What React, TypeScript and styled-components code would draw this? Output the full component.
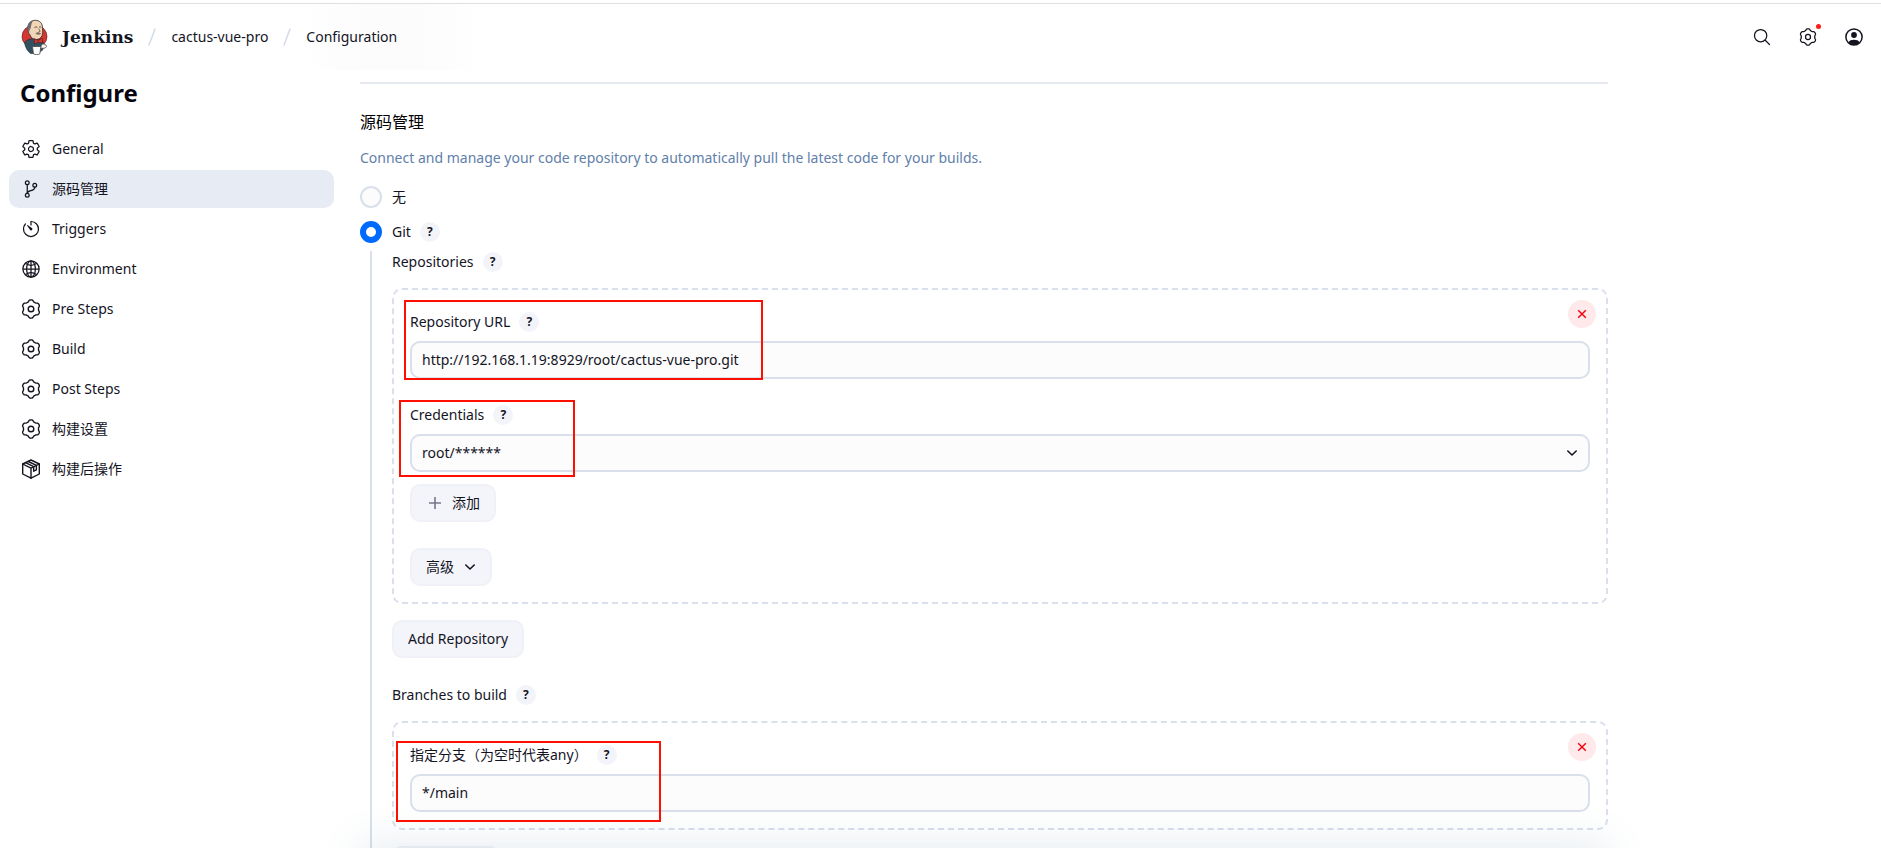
import React, { useState } from 'react';
import styled, { createGlobalStyle } from 'styled-components';
import {
  IoGitBranchOutline,
  IoGlobeOutline,
  IoSearchOutline,
  IoSettingsOutline,
  IoTimerOutline,
} from 'react-icons/io5';

const ink = '#14141f';
const line = '#d9dfeb';
const sans = `'Noto Sans', 'Noto Sans CJK SC', sans-serif`;

const GlobalStyle = createGlobalStyle`
  *, *::before, *::after { box-sizing: border-box; }
  body {
    margin: 0;
    background: #fff;
    color: ${ink};
    font: 14px/20px ${sans};
  }
  button, input, select { font: inherit; color: inherit; margin: 0; }
`;

/* ---------- page frame ---------- */

const Page = styled.div`
  display: flex;
  flex-direction: column;
  height: 100vh;
  overflow: hidden;
`;

const Header = styled.header`
  flex: none;
  display: flex;
  align-items: center;
  justify-content: space-between;
  height: 67px;
  margin-top: 3px;
  padding: 0 17px 0 21px;
  border-top: 1px solid #e0e0e0;
  background: linear-gradient(90deg, #fff 300px, #fcfcfd 360px, #fcfcfd 420px, #fff 490px);
`;

const Breadcrumbs = styled.nav`
  display: flex;
  align-items: center;
  gap: 15px;
`;

const Crumb = styled.a`
  color: inherit;
  text-decoration: none;
`;

const Brand = styled(Crumb)`
  display: flex;
  align-items: center;
  gap: 14px;
  font: bold 17px/34px 'DejaVu Serif', serif;
`;

const HeaderActions = styled.div`
  display: flex;
  align-items: center;
  gap: 26px;
`;

const IconButton = styled.button`
  position: relative;
  display: grid;
  place-items: center;
  width: 20px;
  height: 20px;
  padding: 0;
  border: 0;
  background: none;
  cursor: pointer;
`;

const Badge = styled.span`
  position: absolute;
  top: -3px;
  right: -3px;
  width: 5px;
  height: 5px;
  border-radius: 50%;
  background: #ff1a1a;
`;

const Body = styled.div`
  flex: 1;
  display: flex;
  gap: 26px;
  min-height: 0;
`;

/* ---------- side panel ---------- */

const SidePanel = styled.aside`
  flex: none;
  width: 334px;
  padding-left: 9px;
`;

const Title = styled.h1`
  margin: 6px 0 20px;
  padding-left: 11px;
  font-size: 24px;
  line-height: 34px;
  font-weight: 700;
  color: #05050f;
`;

const TaskList = styled.ul`
  display: flex;
  flex-direction: column;
  gap: 2px;
  margin: 0;
  padding: 0;
  list-style: none;
`;

const TaskLink = styled.a<{ $selected?: boolean }>`
  display: flex;
  align-items: center;
  gap: 11px;
  height: 38px;
  padding: 0 12px;
  border-radius: 10px;
  background: ${(p) => (p.$selected ? '#e7ebf3' : 'transparent')};
  color: inherit;
  text-decoration: none;
`;

/* ---------- form ---------- */

const Main = styled.main`
  position: relative;
  flex: 1;
  min-width: 0;
  max-width: 1248px;
  margin-right: 26px;
  padding-top: 12px;
`;

const BottomBar = styled.div`
  position: absolute;
  left: 0;
  right: 0;
  bottom: -20px;
  height: 20px;
  box-shadow: 0 0 40px rgba(90, 125, 165, 0.24);
  pointer-events: none;
`;

const Divider = styled.hr`
  height: 2px;
  margin: 0 0 26px;
  border: 0;
  background: #e5eaf0;
`;

const SectionTitle = styled.h2`
  margin: 0 0 14px;
  font-size: 16px;
  line-height: 24px;
  font-weight: 400;
  color: #000;
`;

const Description = styled.p`
  margin: 0 0 18px;
  color: #5f80aa;
`;

const RadioRow = styled.div`
  display: flex;
  align-items: center;
  height: 22px;
  margin-bottom: 13px;
`;

const RadioLabel = styled.label`
  display: flex;
  align-items: center;
  gap: 10px;
  cursor: pointer;
`;

const Radio = styled.input`
  appearance: none;
  width: 22px;
  height: 22px;
  border: 2px solid ${line};
  border-radius: 50%;
  background: #fcfcfd;

  &:checked {
    border: 6px solid #006aff;
    background: #fff;
  }
`;

const Nested = styled.div`
  margin: -5px 0 0 10px;
  padding-left: 20px;
  border-left: 2px solid ${line};
`;

const LabelRow = styled.div`
  display: flex;
  align-items: center;
  height: 22px;
`;

const HelpButton = styled.button`
  width: 20px;
  height: 20px;
  margin-left: 9px;
  padding: 0;
  border: 0;
  border-radius: 50%;
  background: #f3f4f9;
  font-size: 12px;
  font-weight: 700;
  cursor: pointer;
`;

const Chunk = styled.div`
  position: relative;
  margin: 15px 0 16px;
  padding: 21px 16px 16px;
  border: 2px dashed ${line};
  border-radius: 10px;
`;

const DeleteButton = styled.button`
  position: absolute;
  top: 10px;
  right: 10px;
  display: grid;
  place-items: center;
  width: 28px;
  height: 28px;
  padding: 0;
  border: 0;
  border-radius: 50%;
  background: #ffe9ea;
  color: #f5000c;
  cursor: pointer;
`;

const Field = styled.div`
  & + & {
    margin-top: 25px;
  }
`;

const ControlBox = styled.div`
  position: relative;
  margin-top: 8px;
  svg {
    position: absolute;
    top: 13px;
    right: 12px;
    pointer-events: none;
  }
`;

const TextInput = styled.input`
  display: block;
  width: 100%;
  height: 38px;
  padding: 0 10px 2px;
  border: 2px solid ${line};
  border-radius: 10px;
  background: #fcfcfd;
`;

const SelectInput = styled.select`
  display: block;
  appearance: none;
  width: 100%;
  height: 38px;
  padding: 0 10px;
  border: 2px solid ${line};
  border-radius: 10px;
  background: #fcfcfd;
`;

const Button = styled.button`
  display: flex;
  align-items: center;
  gap: 10px;
  height: 38px;
  padding: 0 14px;
  border: 2px solid #f0f1f6;
  border-radius: 10px;
  background: #f4f5fa;
  cursor: pointer;
`;

const ButtonStack = styled.div`
  display: flex;
  flex-direction: column;
  align-items: flex-start;
  gap: 26px;
  margin-top: 12px;
`;

const NextLabelRow = styled(LabelRow)`
  margin-top: 26px;
`;

/* Red marker frame drawn over the form */
const Highlight = styled.span<{ $x: number; $y: number; $w: number; $h: number }>`
  position: absolute;
  left: ${(p) => p.$x}px;
  top: ${(p) => p.$y}px;
  width: ${(p) => p.$w}px;
  height: ${(p) => p.$h}px;
  border: 2px solid #ff0f00;
  pointer-events: none;
`;

/* ---------- icons ---------- */

const flowerPath = (() => {
  const points: string[] = [];
  for (let i = 0; i < 120; i += 1) {
    const a = (i / 120) * Math.PI * 2;
    const r = 8.3 + 0.85 * Math.tanh(1.8 * Math.cos(6 * a));
    points.push(`${(10 + r * Math.sin(a)).toFixed(2)} ${(10 - r * Math.cos(a)).toFixed(2)}`);
  }
  return `M${points.join('L')}Z`;
})();

const GearIcon = ({ size }: { size: number }) => (
  <svg width={size} height={size} viewBox="0 0 20 20" fill="none" stroke="currentColor" strokeWidth="1.4" aria-hidden>
    <path d={flowerPath} strokeLinejoin="round" />
    <circle cx="10" cy="10" r="2.8" />
  </svg>
);

const CubeIcon = () => (
  <svg width="20" height="20" viewBox="0 0 20 20" fill="none" stroke="currentColor" strokeWidth="1.4" strokeLinejoin="round" strokeLinecap="round" aria-hidden>
    <path d="M10 1 18.300 5v10L10 19.200 1.700 15V5z" />
    <path d="M1.700 5 10 9.200 18.300 5M10 9.200v10" />
    <path d="M4.600 3.700l8.100 4v4.500l2.700-1.400V6.400L7.300 2.500" />
  </svg>
);

const UserIcon = () => (
  <svg width="18" height="18" viewBox="0 0 18 18" aria-hidden>
    <circle cx="9" cy="9" r="8.100" fill="none" stroke="currentColor" strokeWidth="1.500" />
    <circle cx="9" cy="7" r="2.900" fill="currentColor" />
    <path d="M3.400 14.500C4.400 12.300 6.300 11.700 9 11.700s4.600.6 5.600 2.800A8 8 0 0 1 9 17a8 8 0 0 1-5.600-2.500z" fill="currentColor" />
  </svg>
);

const Chevron = () => (
  <svg width="12" height="12" viewBox="0 0 12 12" fill="none" stroke="currentColor" strokeWidth="1.600" strokeLinecap="round" strokeLinejoin="round" aria-hidden>
    <path d="M1.800 4 6 8 10.200 4" />
  </svg>
);

const Plus = () => (
  <svg width="16" height="12" viewBox="0 0 16 12" stroke="#77778a" strokeWidth="1.600" aria-hidden>
    <path d="M3 6h12M9 0v12" />
  </svg>
);

const Cross = () => (
  <svg width="10" height="10" viewBox="0 0 10 10" stroke="currentColor" strokeWidth="1.400" aria-hidden>
    <path d="M1.200 1.200l7.600 7.600M8.800 1.200L1.200 8.800" />
  </svg>
);

const Slash = () => (
  <svg width="8" height="18" viewBox="0 0 8 18" stroke="#d3daea" strokeWidth="1.500" aria-hidden>
    <path d="M7.200.5.8 17.500" />
  </svg>
);

const JenkinsLogo = () => (
  <svg width="27" height="36" viewBox="0 0 27 36" aria-hidden>
    <ellipse cx="13.500" cy="17.500" rx="12.500" ry="11.500" fill="#d33833" stroke="#5d1714" strokeWidth=".6" />
    <path d="M3.500 23.500c2.500-2.800 5-3.500 8-3.800l7 .5c2.200.8 3.600 2.200 4.200 4.300l-1 6.500-5 3.500H9.500C6.300 32 4.300 28.500 3.500 23.500z" fill="#335061" stroke="#1c2a33" strokeWidth=".6" />
    <path d="M7 9C7 4 10 1.300 14.300 1.300c4.500 0 7.400 3.200 7.300 8-.1 3 .5 4.800-.5 7.200-1 2.600-3.300 4-5.800 4-3.300 0-5.300-1.800-6.300-4.600C7.300 14.500 7 12 7 9z" fill="#f0d6b7" stroke="#31251f" strokeWidth=".8" />
    <path d="M12.500 1.500C8.500 2.200 6 5.300 6.300 9.600c.1 2 .8 3.600 1.800 4.800.3-2.200.1-3.300 1.200-4.400C10.500 7.500 9.800 4 12.500 1.500z" fill="#6d6b6d" />
    <path d="M13.500 8.600c1-.8 2-.8 2.800-.1M18 8.300c.8-.6 1.600-.6 2.400 0" stroke="#31251f" strokeWidth=".8" fill="none" />
    <path d="M14.500 14.500c1.300-1.600 3-1.700 4.200-.8l1.800 1-2 .8c-1.500.6-2.800.3-4-1z" fill="#81716a" />
    <path d="M17.700 9.500l1.400 3-1.500.5" stroke="#31251f" strokeWidth=".6" fill="none" />
    <path d="M13.300 19.500l3.700 2 4.200-2.500.6 5-4.600-1-3.600 2z" fill="#d33833" stroke="#5d1714" strokeWidth=".6" />
    <path d="M11.500 27.500h8.300l-1 7.500c-2 .8-4.600.8-6.300 0z" fill="#fff" stroke="#4a4a4a" strokeWidth=".8" />
    <path d="M20 29c2.500.8 4.500.4 5.600-1.600-.6-2-2.200-2.700-4.500-2.200" fill="#f7f3ee" stroke="#4a4a4a" strokeWidth=".8" />
  </svg>
);

/* ---------- content ---------- */

const tasks: { label: string; icon: React.ReactNode; selected?: boolean }[] = [
  { label: 'General', icon: <IoSettingsOutline size={20} /> },
  { label: '源码管理', icon: <IoGitBranchOutline size={20} />, selected: true },
  { label: 'Triggers', icon: <IoTimerOutline size={20} /> },
  { label: 'Environment', icon: <IoGlobeOutline size={20} /> },
  { label: 'Pre Steps', icon: <GearIcon size={20} /> },
  { label: 'Build', icon: <GearIcon size={20} /> },
  { label: 'Post Steps', icon: <GearIcon size={20} /> },
  { label: '构建设置', icon: <GearIcon size={20} /> },
  { label: '构建后操作', icon: <CubeIcon /> },
];

const Help = ({ topic }: { topic: string }) => (
  <HelpButton type="button" aria-label={`Help for ${topic}`}>
    ?
  </HelpButton>
);

export default function App() {
  const [scm, setScm] = useState('git');
  const [url, setUrl] = useState('http://192.168.1.19:8929/root/cactus-vue-pro.git');
  const [branch, setBranch] = useState('*/main');

  return (
    <Page>
      <GlobalStyle />
      <Header>
        <Breadcrumbs>
          <Brand href="#">
            <JenkinsLogo />
            Jenkins
          </Brand>
          <Slash />
          <Crumb href="#project">cactus-vue-pro</Crumb>
          <Slash />
          <Crumb href="#configuration">Configuration</Crumb>
        </Breadcrumbs>
        <HeaderActions>
          <IconButton aria-label="Search">
            <IoSearchOutline size={20} />
          </IconButton>
          <IconButton aria-label="Manage">
            <GearIcon size={18} />
            <Badge />
          </IconButton>
          <IconButton aria-label="User">
            <UserIcon />
          </IconButton>
        </HeaderActions>
      </Header>

      <Body>
        <SidePanel>
          <Title>Configure</Title>
          <TaskList>
            {tasks.map((task) => (
              <li key={task.label}>
                <TaskLink href="#section" $selected={task.selected}>
                  {task.icon}
                  {task.label}
                </TaskLink>
              </li>
            ))}
          </TaskList>
        </SidePanel>

        <Main>
          <Divider />
          <SectionTitle>源码管理</SectionTitle>
          <Description>
            Connect and manage your code repository to automatically pull the latest code for your builds.
          </Description>

          <RadioRow>
            <RadioLabel>
              <Radio type="radio" name="scm" checked={scm === 'none'} onChange={() => setScm('none')} />
              无
            </RadioLabel>
          </RadioRow>
          <RadioRow>
            <RadioLabel>
              <Radio type="radio" name="scm" checked={scm === 'git'} onChange={() => setScm('git')} />
              Git
            </RadioLabel>
            <Help topic="Git" />
          </RadioRow>

          <Nested>
            <LabelRow>
              Repositories
              <Help topic="Repositories" />
            </LabelRow>
            <Chunk>
              <DeleteButton type="button" aria-label="Delete repository">
                <Cross />
              </DeleteButton>
              <Field>
                <LabelRow>
                  <label htmlFor="repo-url">Repository URL</label>
                  <Help topic="Repository URL" />
                </LabelRow>
                <ControlBox>
                  <TextInput id="repo-url" value={url} onChange={(e) => setUrl(e.target.value)} />
                </ControlBox>
              </Field>
              <Field>
                <LabelRow>
                  <label htmlFor="credentials">Credentials</label>
                  <Help topic="Credentials" />
                </LabelRow>
                <ControlBox>
                  <SelectInput id="credentials">
                    <option>root/******</option>
                  </SelectInput>
                  <Chevron />
                </ControlBox>
              </Field>
              <ButtonStack>
                <Button type="button">
                  <Plus />
                  添加
                </Button>
                <Button type="button">
                  高级
                  <Chevron />
                </Button>
              </ButtonStack>
              <Highlight $x={10} $y={10} $w={359} $h={80} />
              <Highlight $x={5} $y={110} $w={176} $h={77} />
            </Chunk>
            <Button type="button">Add Repository</Button>

            <NextLabelRow>
              Branches to build
              <Help topic="Branches to build" />
            </NextLabelRow>
            <Chunk>
              <DeleteButton type="button" aria-label="Delete branch">
                <Cross />
              </DeleteButton>
              <Field>
                <LabelRow>
                  <label htmlFor="branch">指定分支（为空时代表any）</label>
                  <Help topic="指定分支" />
                </LabelRow>
                <ControlBox>
                  <TextInput id="branch" value={branch} onChange={(e) => setBranch(e.target.value)} />
                </ControlBox>
              </Field>
              <Highlight $x={2} $y={18} $w={265} $h={81} />
            </Chunk>
            <Button type="button">Add Branch</Button>
          </Nested>
          <BottomBar />
        </Main>
      </Body>
    </Page>
  );
}
